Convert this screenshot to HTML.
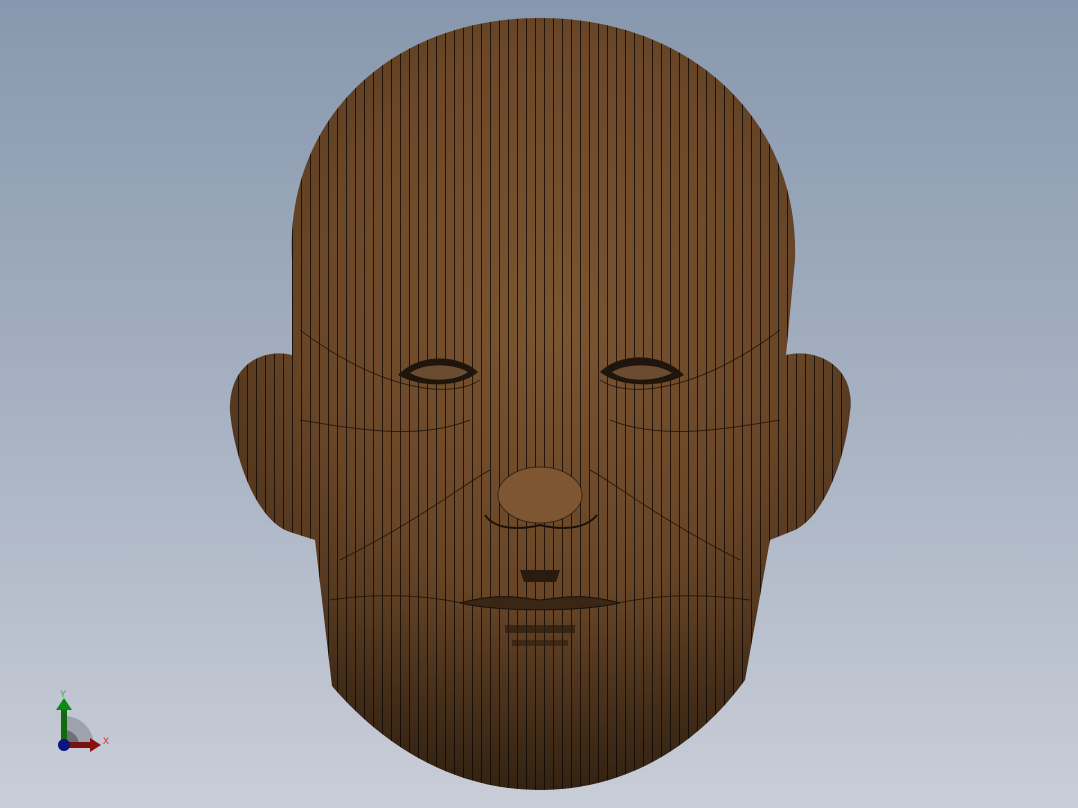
<!DOCTYPE html>
<html><head><meta charset="utf-8"><style>
html,body{margin:0;padding:0;width:1078px;height:808px;overflow:hidden}
body{background:linear-gradient(180deg,#8798ae 0%,#a6b1c2 50%,#c9cdd7 100%)}
svg{display:block}
</style></head><body>
<svg width="1078" height="808" viewBox="0 0 1078 808" xmlns="http://www.w3.org/2000/svg">
<defs>
<radialGradient id="skin" cx="50%" cy="40%" r="62%">
<stop offset="0" stop-color="#7e5732"/>
<stop offset="0.55" stop-color="#6c4828"/>
<stop offset="1" stop-color="#3f2a16"/>
</radialGradient>
<linearGradient id="shade" x1="0" y1="0" x2="0" y2="1">
<stop offset="0" stop-color="#000" stop-opacity="0"/>
<stop offset="0.75" stop-color="#000" stop-opacity="0.05"/>
<stop offset="1" stop-color="#000" stop-opacity="0.28"/>
</linearGradient>
<pattern id="lines" width="9" height="808" patternUnits="userSpaceOnUse">
<line x1="4.5" y1="0" x2="4.5" y2="808" stroke="#140c05" stroke-width="1" stroke-opacity="0.85"/>
</pattern>
<clipPath id="hc"><path d="M540,18 C690,18 800,120 795,260 L786,355 C812,348 856,362 850,412 C845,462 822,522 790,532 L770,540 L745,680 C700,742 630,790 540,790 C450,790 380,742 332,686 L315,540 L290,532 C258,522 235,462 230,412 C228,362 266,348 292,355 L292,260 C285,120 390,18 540,18 Z"/></clipPath>
</defs>
<g clip-path="url(#hc)">
<rect x="200" y="0" width="700" height="808" fill="url(#skin)"/>
<rect x="200" y="0" width="700" height="808" fill="url(#lines)"/>
<rect x="200" y="0" width="700" height="808" fill="url(#shade)"/>
<g fill="none" stroke="#140c05" stroke-opacity="0.7">
<path d="M300,330 C380,390 450,400 480,380"/>
<path d="M780,330 C700,390 630,400 600,380"/>
<path d="M330,600 C400,590 450,600 470,605"/>
<path d="M750,600 C680,590 630,600 610,605"/>
<path d="M340,560 C420,520 470,480 490,470"/>
<path d="M740,560 C660,520 610,480 590,470"/>
<path d="M300,420 C360,430 420,440 470,420"/>
<path d="M780,420 C720,430 660,440 610,420"/>
</g>
</g>
<path d="M398,375 C420,352 460,355 478,372 C460,388 420,388 398,375 Z" fill="#20150c"/>
<path d="M410,373 C425,362 455,364 468,372 C455,382 425,382 410,373 Z" fill="#6a4c30"/>
<path d="M600,372 C620,352 662,352 684,375 C662,388 620,388 600,372 Z" fill="#20150c"/>
<path d="M612,372 C625,364 655,362 672,373 C655,382 625,382 612,372 Z" fill="#6a4c30"/>
<ellipse cx="540" cy="495" rx="42" ry="28" fill="#7e5632" stroke="#140c05" stroke-opacity="0.6"/>
<path d="M485,515 C495,530 520,530 540,525 C560,530 585,530 597,515" fill="none" stroke="#1c1209" stroke-width="2"/>
<path d="M520,570 L560,570 L556,582 L524,582 Z" fill="#2a1b0e"/>
<path d="M460,603 C500,592 520,598 540,600 C560,598 580,592 620,603 C580,612 500,612 460,603 Z" fill="#3a2614" stroke="#1c1209"/>
<rect x="505" y="625" width="70" height="8" fill="#2a1b0e" opacity="0.7"/>
<rect x="512" y="640" width="56" height="6" fill="#2a1b0e" opacity="0.6"/>
<g>
<path d="M64,745 L64,716 A30,30 0 0 1 94,745 Z" fill="#8e939c" opacity="0.7"/>
<path d="M64,745 L64,730 A15,15 0 0 1 79,745 Z" fill="#5f646c" opacity="0.8"/>
<rect x="61" y="708" width="6" height="37" fill="#0f6a10"/>
<polygon points="56,710 64,698 72,710" fill="#0a8a10"/>
<rect x="64" y="742" width="28" height="6" fill="#7a1010"/>
<polygon points="90,738 101,745 90,752" fill="#8a1010"/>
<circle cx="64" cy="745" r="6" fill="#0a1580"/>
<text x="60" y="697" font-family="Liberation Sans,sans-serif" font-size="9" fill="#2ab02a">Y</text>
<text x="103" y="744" font-family="Liberation Sans,sans-serif" font-size="9" fill="#e02020">X</text>
</g>
</svg>
</body></html>
